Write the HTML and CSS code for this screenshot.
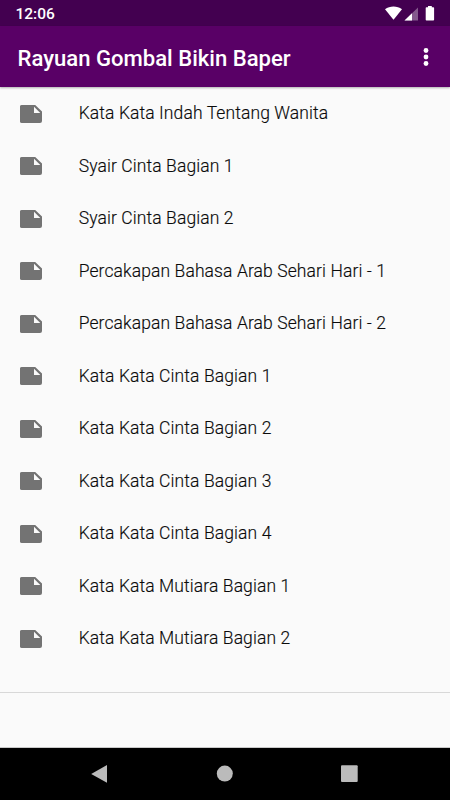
FILE: index.html
```html
<!DOCTYPE html>
<html lang="id">
<head>
<meta charset="utf-8">
<title>Rayuan Gombal Bikin Baper</title>
<link rel="stylesheet" href="styles.css">
</head>
<body>
<svg width="0" height="0" class="defs"><defs>
<symbol id="note" viewBox="0 0 22 18"><path fill-rule="evenodd" d="M1.8 0H15.2L22 6.6V16a2 2 0 0 1-2 2H1.8A1.8 1.8 0 0 1 0 16V2A1.8 1.8 0 0 1 1.8 0ZM14 1.8V8H20.3Z"/></symbol>
</defs></svg>
<div class="status"><span class="time">12:06</span>
<svg class="status-icons" width="52" height="16" viewBox="0 0 52 16"><path fill="#fff" d="M0 3.3C4.8-.4 12.2-.4 17 3.3L8.5 13.7Z"/><path fill="#fff" fill-opacity=".35" d="M33 1.5V14.5H19.5Z"/><path fill="#fff" d="M27 7.3V14.5H19.5Z"/><path fill="#fff" d="M41.5 1.3H43V0h3.8v1.3h1.5q.8 0 .8.8v11.6q0 .8-.8.8h-6.8q-.8 0-.8-.8V2.1q0-.8.8-.8Z"/></svg></div>
<header class="bar"><h1>Rayuan Gombal Bikin Baper</h1>
<svg class="more" width="6" height="20" viewBox="0 0 6 20"><circle cx="3" cy="3.5" r="2.4"/><circle cx="3" cy="10" r="2.4"/><circle cx="3" cy="16.5" r="2.4"/></svg></header>
<ul class="list">
<li><svg class="note"><use href="#note"/></svg><span>Kata Kata Indah Tentang Wanita</span></li>
<li><svg class="note"><use href="#note"/></svg><span>Syair Cinta Bagian 1</span></li>
<li><svg class="note"><use href="#note"/></svg><span>Syair Cinta Bagian 2</span></li>
<li><svg class="note"><use href="#note"/></svg><span>Percakapan Bahasa Arab Sehari Hari - 1</span></li>
<li><svg class="note"><use href="#note"/></svg><span>Percakapan Bahasa Arab Sehari Hari - 2</span></li>
<li><svg class="note"><use href="#note"/></svg><span>Kata Kata Cinta Bagian 1</span></li>
<li><svg class="note"><use href="#note"/></svg><span>Kata Kata Cinta Bagian 2</span></li>
<li><svg class="note"><use href="#note"/></svg><span>Kata Kata Cinta Bagian 3</span></li>
<li><svg class="note"><use href="#note"/></svg><span>Kata Kata Cinta Bagian 4</span></li>
<li><svg class="note"><use href="#note"/></svg><span>Kata Kata Mutiara Bagian 1</span></li>
<li><svg class="note"><use href="#note"/></svg><span>Kata Kata Mutiara Bagian 2</span></li>
</ul>
<div class="ad"></div>
<nav class="nav">
<svg viewBox="0 0 20 20"><path d="M17 1V18.8L1.2 9.9Z"/></svg>
<svg viewBox="0 0 20 20"><circle cx="9.8" cy="9.6" r="8"/></svg>
<svg viewBox="0 0 20 20"><rect x="1" y="1.3" width="16.7" height="16.7" rx="1"/></svg>
</nav>
</body>
</html>
```
FILE: styles.css
```css
* { box-sizing: border-box; }
body { margin: 0; width: 450px; height: 800px; overflow: hidden; display: flex; flex-direction: column; background: #fafafa; font-family: Roboto, sans-serif; }
.defs { position: absolute; }
.status { height: 26px; flex: none; background: #430050; color: #fff; display: flex; justify-content: space-between; padding: 5px 13px 0 15.5px; }
.time { font-size: 15.5px; line-height: 18px; font-weight: 500; }
.status-icons { display: block; margin-top: 1px; }
.bar { height: 61px; flex: none; background: #590066; display: flex; align-items: center; justify-content: space-between; padding: 0 21px 0 17.5px; box-shadow: 0 1px 2px rgba(0, 0, 0, .3); }
h1 { margin: 2px 0 0; color: #fff; font-size: 22.1px; font-weight: 500; line-height: 28px; }
.more { fill: #fff; }
.list { flex: 1; list-style: none; margin: -.2px 0 0; padding: 0; }
.list li { height: 52.5px; display: flex; align-items: center; padding-left: 19.7px; gap: 37px; font-size: 17.5px; font-weight: 300; letter-spacing: .1px; color: #0a0a0a; -webkit-text-stroke: .15px #0a0a0a; }
.note { width: 22px; height: 18px; margin-top: 1.5px; fill: #737373; }
.ad { height: 56px; flex: none; border-top: 1px solid #d8d8d8; border-bottom: 1px solid #c8c8c8; }
.nav { height: 52px; flex: none; background: #000; display: flex; justify-content: center; gap: 105px; align-items: center; }
.nav svg { width: 20px; height: 20px; fill: #bbb; }
```
